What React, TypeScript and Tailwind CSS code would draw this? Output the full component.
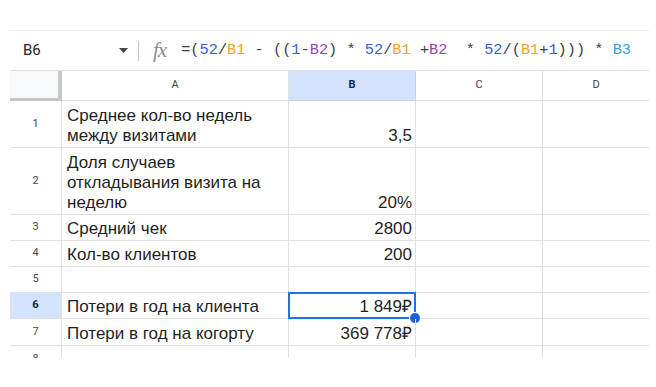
import React from "react";

type Row = {
  n: number;
  h: string;
  a?: React.ReactNode;
  b?: string;
  selected?: boolean;
};

const rows: Row[] = [
  { n: 1, h: "h-[47px]", a: <>Среднее кол-во недель<br />между визитами</>, b: "3,5" },
  { n: 2, h: "h-[67px]", a: <>Доля случаев<br />откладывания визита на<br />неделю</>, b: "20%" },
  { n: 3, h: "h-[26px]", a: "Средний чек", b: "2800" },
  { n: 4, h: "h-[26px]", a: "Кол-во клиентов", b: "200" },
  { n: 5, h: "h-[26px]" },
  { n: 6, h: "h-[26px]", a: "Потери в год на клиента", b: "1 849₽", selected: true },
  { n: 7, h: "h-[27px]", a: "Потери в год на когорту", b: "369 778₽" },
  { n: 8, h: "h-[27px]" },
];

const num = "text-[#2f5fdc]";
const ref1 = "text-[#f3a12b]";
const ref2 = "text-[#9a44b0]";
const ref3 = "text-[#2ea6d8]";

const Formula = () => (
  <span className="text-[#3c4043]">
    =(<span className={num}>52</span>/<span className={ref1}>B1</span> - ((
    <span className={num}>1</span>-<span className={ref2}>B2</span>) *{" "}
    <span className={num}>52</span>/<span className={ref1}>B1</span> +
    <span className={ref2}>B2</span>{"  "}*{" "}
    <span className={num}>52</span>/(<span className={ref1}>B1</span>+
    <span className={num}>1</span>))) * <span className={ref3}>B3</span>
  </span>
);

const App: React.FC = () => {
  return (
    <div className="w-[656px] h-[387px] bg-white overflow-hidden pt-[30px] pl-[10px]">
      <div className="w-[639px]">
        {/* formula bar */}
        <div className="h-[41px] flex items-center border-t border-b border-[#eceef0] border-b-[#e1e3e1]">
          <div className="w-[128px] flex items-center pl-[13px] pr-[10px] justify-between">
            <span className="text-[15px] text-[#1f1f1f]" style={{ fontFamily: "Roboto, sans-serif" }}>
              B6
            </span>
            <svg width="9" height="5" viewBox="0 0 9 5">
              <path d="M0 0 L9 0 L4.5 5 Z" fill="#444746" />
            </svg>
          </div>
          <div className="w-px h-[20px] bg-[#c7c7c7]" />
          <span
            className="ml-[14px] text-[21px] italic text-[#8d8d8d] tracking-[-1px]"
            style={{ fontFamily: "'Liberation Serif', serif" }}
          >
            fx
          </span>
          <span
            className="ml-[15px] text-[15.3px] whitespace-pre"
            style={{ fontFamily: "'Liberation Mono', monospace" }}
          >
            <Formula />
          </span>
        </div>

        {/* grid */}
        <div className="h-[287px] overflow-hidden" style={{ fontFamily: "'Liberation Sans', Arial, sans-serif" }}>
          <div className="flex h-[30px] text-[11px] text-[#444746]" style={{ fontFamily: "Roboto, sans-serif" }}>
            <div className="w-[52px] bg-[#f8f9fa] border-r-4 border-b-[3px] border-[#c4c7c5]" />
            <div className="w-[227px] flex items-center justify-center border-r border-b border-[#e1e1e1]">A</div>
            <div className="w-[127px] flex items-center justify-center bg-[#d3e3fd] font-bold text-[#0b1f4a] border-r border-b border-[#c3d3ee]">
              B
            </div>
            <div className="w-[127px] flex items-center justify-center border-r border-b border-[#e1e1e1]">C</div>
            <div className="w-[106px] flex items-center justify-center border-b border-[#e1e1e1]">D</div>
          </div>

          {rows.map((r) => (
            <div key={r.n} className={`flex ${r.h}`}>
              <div
                className={`w-[52px] flex items-center justify-center text-[11px] border-r border-b border-[#e1e1e1] ${
                  r.selected ? "bg-[#d3e3fd] font-bold text-[#0b1f4a]" : "text-[#444746]"
                }`}
                style={{ fontFamily: "Roboto, sans-serif" }}
              >
                {r.n}
              </div>
              <div className="w-[227px] flex items-end pl-[5px] pb-[1px] text-[17px] leading-[20px] text-[#1f1f1f] border-r border-b border-[#e1e1e1]">
                <div>{r.a}</div>
              </div>
              <div className="w-[127px] relative flex items-end justify-end pr-[3px] pb-[1px] text-[17px] leading-[20px] text-[#1f1f1f] border-r border-b border-[#e1e1e1]">
                {r.b}
                {r.selected && (
                  <div className="absolute -top-px -left-px -right-px -bottom-px border-2 border-[#1a73e8]">
                    <div className="absolute -right-[7px] -bottom-[7px] w-[12px] h-[12px] rounded-full bg-[#1b5fd4] border border-white" />
                  </div>
                )}
              </div>
              <div className="w-[127px] border-r border-b border-[#e1e1e1]" />
              <div className="w-[106px] border-b border-[#e1e1e1]" />
            </div>
          ))}
        </div>
      </div>
    </div>
  );
};

export default App;
